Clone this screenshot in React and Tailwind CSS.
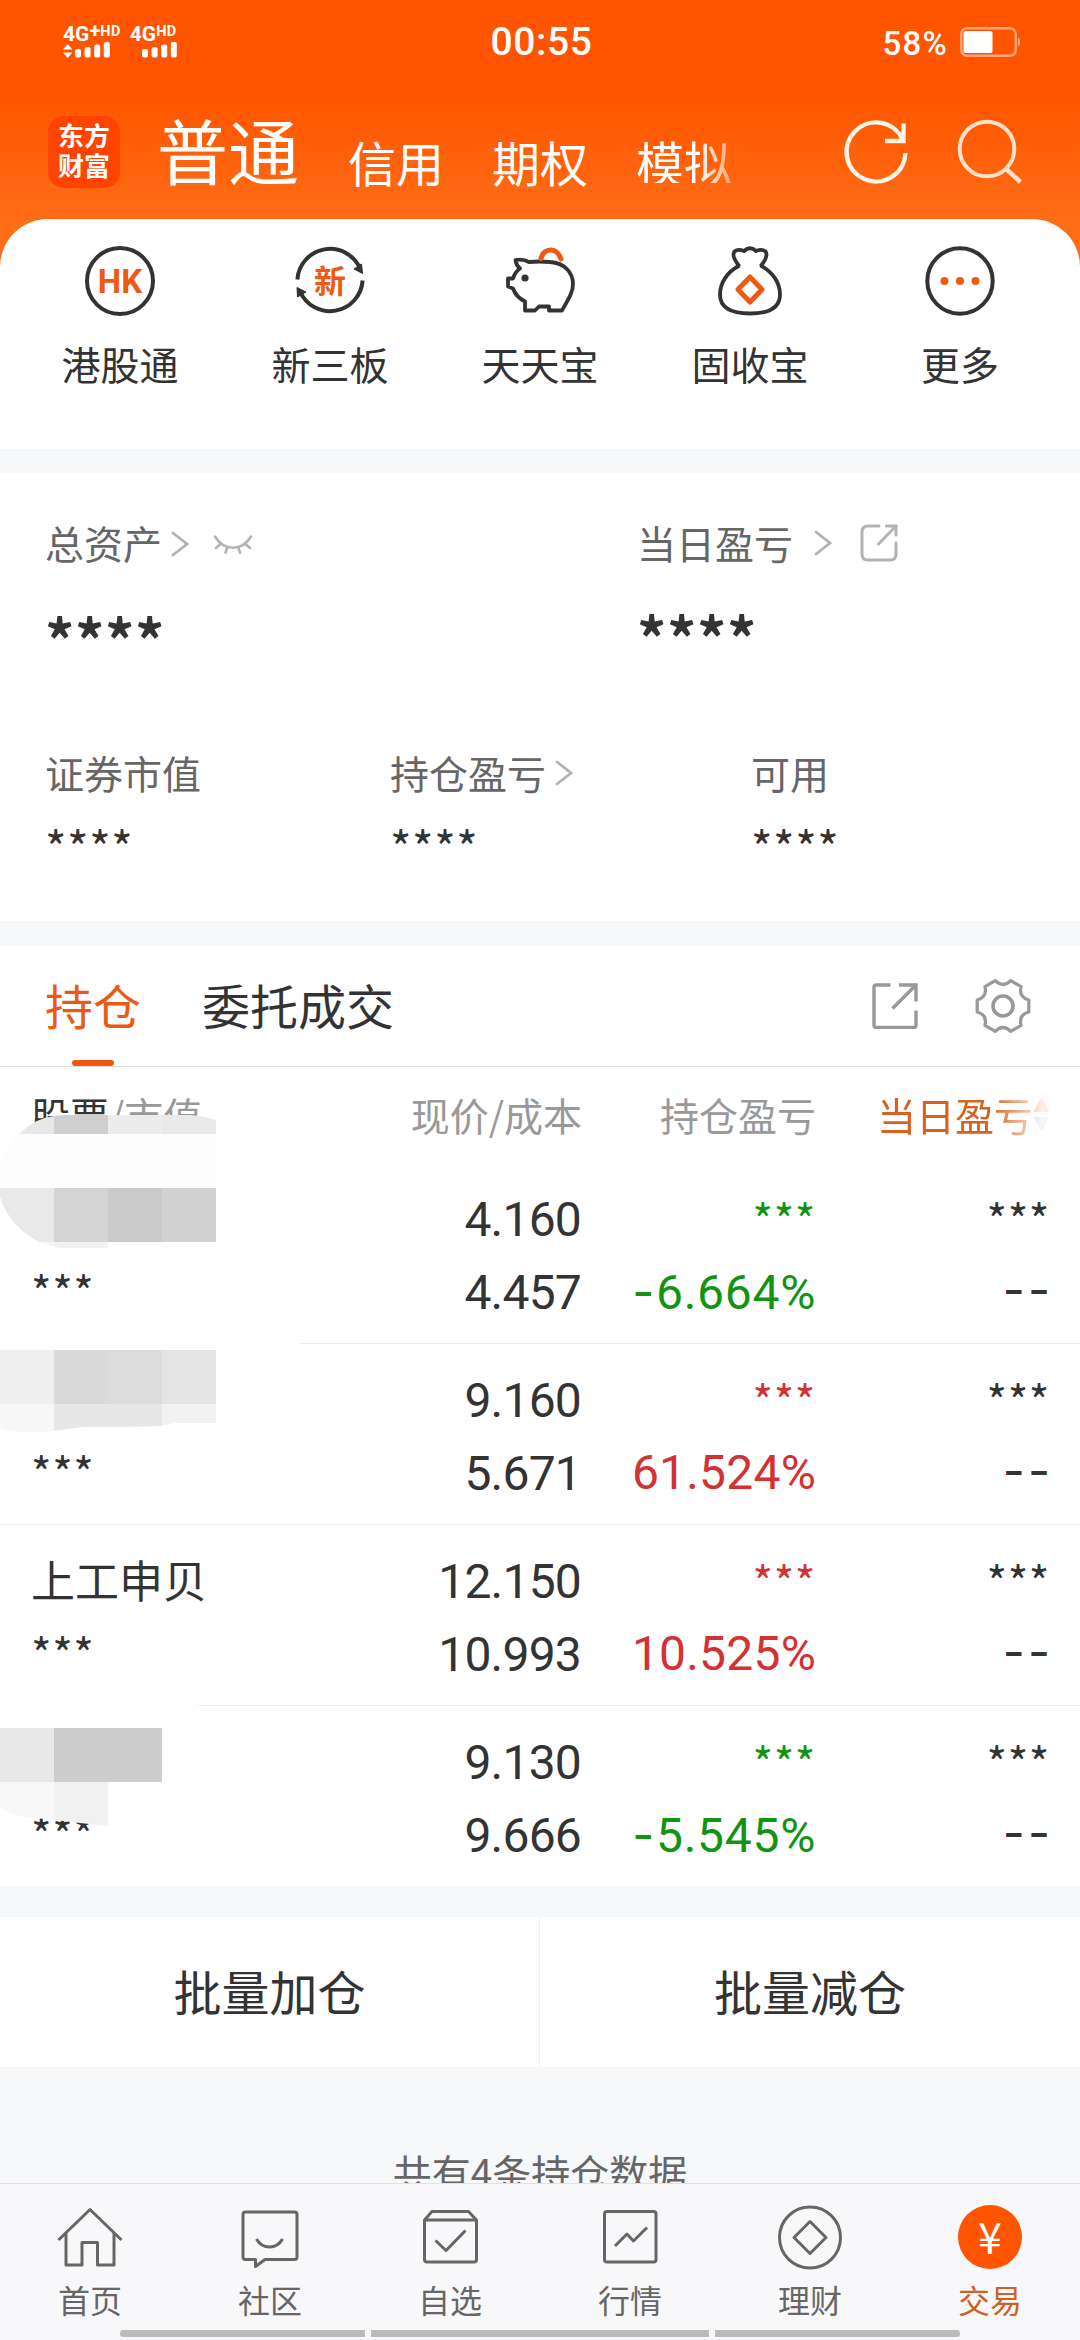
const CJK = "font-['Noto_Sans_CJK_SC',sans-serif]";
const NUM = "font-['Roboto','Noto_Sans_CJK_SC',sans-serif]";

const Stars = ({ children, className = '' }) => (
  <span className={`block tracking-[0.6px] ${className}`}>{children}</span>
);

const Chevron = ({ className = '' }) => (
  <svg viewBox="0 0 18 28" className={`h-7 w-[18px] shrink-0 ${className}`} fill="none" stroke="#b3b3b3" strokeWidth="2.8" strokeLinecap="round">
    <path d="M2 3L16 14L2 25" />
  </svg>
);

/* ---------- status bar ---------- */

const Signal = ({ plus }) => (
  <div className="flex flex-col">
    <div className="flex h-4 items-start font-bold leading-none">
      <span className="text-[21px] leading-[16px]">4G</span>
      {plus && <span className="text-[20px] leading-[10px]">+</span>}
      <span className="text-[14.5px] leading-[11px] tracking-[0.4px]">HD</span>
    </div>
    <svg viewBox="0 0 48 17" className="h-[17px] w-12" fill="#fff">
      {plus && <path d="M0 7.5L4.7 2L9.4 7.5ZM0 10.5H9.4L4.7 16Z" />}
      <g transform="translate(12 0)">
        <rect x="0" y="7" width="6" height="8.5" rx="2" />
        <rect x="9.6" y="5" width="6" height="10.5" rx="2" />
        <rect x="19.2" y="2.5" width="6" height="13" rx="2" />
        <rect x="28.8" y="0" width="6" height="15.5" rx="2" />
      </g>
    </svg>
  </div>
);

const StatusBar = () => (
  <div className={`grid h-[84px] grid-cols-3 items-center pl-[63px] pr-[60px] text-white ${NUM}`}>
    <div className="flex gap-[9px]">
      <Signal plus />
      <Signal />
    </div>
    <div className="text-center text-[39px] font-medium leading-none tracking-[0.6px]">00:55</div>
    <div className="flex items-center justify-end">
      <span className="mt-[2px] text-[33px] font-medium leading-none tracking-[1.2px]">58%</span>
      <svg viewBox="0 0 60 30" className="ml-[12px] h-[30px] w-[60px]" fill="none">
        <rect x="1.2" y="1.2" width="54.6" height="27.6" rx="6" stroke="#ffa679" strokeWidth="2.4" />
        <rect x="3.5" y="4" width="29" height="22" rx="2" fill="#fff" />
        <path d="M58 10.5Q60 11 60 15Q60 19 58 19.5Z" fill="#ffa679" />
      </svg>
    </div>
  </div>
);

/* ---------- title bar ---------- */

const TitleBar = () => (
  <div className="flex h-[135px] items-center pl-12 pr-[57px] text-white">
    <div className="flex h-[72px] w-[72px] flex-col items-center justify-center rounded-2xl bg-[#ff4300] text-[26px] font-bold leading-[30px]">
      <span className="-mt-[3px]">东方</span>
      <span>财富</span>
    </div>
    <div className="-mt-[7px] flex items-end text-[48px] leading-[44px]">
      <span className="ml-[37px] text-[71px] leading-[70px]">普通</span>
      <span className="ml-[49px]">信用</span>
      <span className="ml-12">期权</span>
      <span className="ml-12 [mask-image:linear-gradient(to_right,black_66%,rgba(0,0,0,0.4)_100%)]">模拟</span>
    </div>
    <svg viewBox="0 0 66 66" className="ml-auto h-[66px] w-[66px]" fill="none" stroke="#fff4e6" strokeWidth="4.4">
      <path d="M62.5 34A29.5 29.5 0 1 1 60 21" />
      <path d="M60.5 4.5V22H42" />
    </svg>
    <svg viewBox="0 0 66 66" className="ml-12 h-[66px] w-[66px]" fill="none" stroke="#ffe0c8" strokeWidth="4">
      <circle cx="30" cy="30" r="27.3" />
      <path d="M48.5 49.5L63.5 63" strokeWidth="4.6" />
    </svg>
  </div>
);

/* ---------- shortcuts ---------- */

const HkIcon = () => (
  <div className={`flex h-[70px] w-[70px] items-center justify-center rounded-full border-[4px] border-[#333] text-[33px] font-bold leading-none text-[#ee5a14] ${NUM}`}>
    HK
  </div>
);

const NewBoardIcon = () => (
  <div className="relative flex h-[70px] w-[70px] items-center justify-center">
    <span className="-mt-[4px] text-[32px] font-bold leading-none text-[#ee5a14]">新</span>
    <svg viewBox="0 0 70 70" className="absolute inset-0" fill="none" stroke="#333" strokeWidth="4">
      <path d="M2.4 33.5A32.7 32.7 0 0 1 65 22.5" />
      <path d="M67.6 34.5A32.7 32.7 0 0 1 5 45.5" />
      <path d="M59 23L66.5 18L67.5 27.5ZM11 46L2.5 51L2 41.5Z" fill="#333" strokeWidth="1" />
    </svg>
  </div>
);

const PigIcon = () => (
  <svg viewBox="0 0 70 70" className="h-[70px] w-[70px]" fill="none" stroke="#333" strokeWidth="3.8" strokeLinejoin="round">
    <path d="M10.5 14Q18 12.5 24 16Q34 15 45 16C60 17 68 27 68 38C68 46 64 52 57 64.5H44V60.5H34L30 64.5H20V55.5Q11 51 8 42.5L3 40.5V32.5H8Q10 26 15 22.5Q11 19 10.5 14Z" />
    <circle cx="20" cy="32" r="3.6" fill="#333" stroke="none" />
    <path d="M36 12.5C39 1 52 1 56 13" stroke="#ee5a14" strokeWidth="5" strokeLinecap="round" />
  </svg>
);

const BagIcon = () => (
  <svg viewBox="0 0 70 70" className="h-[70px] w-[70px]" fill="none" stroke="#333" strokeWidth="3.8" strokeLinejoin="round">
    <path d="M24.5 20.5Q16 10 19.5 5.5Q23 2.5 29 5Q35 -0.5 41 5Q47 2.5 50.5 5.5Q54 10 45.5 20.5" />
    <path d="M24.5 19.5C12 26 5 37 5 48.5C5 60 13 67.5 35 67.5S65 60 65 48.5C65 37 58 26 45.5 19.5" />
    <path d="M35 31L47 43.5L35 56L23 43.5Z" stroke="#ee5a14" strokeWidth="5" />
  </svg>
);

const MoreIcon = () => (
  <svg viewBox="0 0 70 70" className="h-[70px] w-[70px]" fill="#ee5a14">
    <circle cx="35" cy="35" r="32.7" fill="none" stroke="#333" strokeWidth="4" />
    <circle cx="19.5" cy="35" r="4" />
    <circle cx="35" cy="35" r="4" />
    <circle cx="50.5" cy="35" r="4" />
  </svg>
);

const shortcuts = [
  { label: '港股通', Icon: HkIcon },
  { label: '新三板', Icon: NewBoardIcon },
  { label: '天天宝', Icon: PigIcon },
  { label: '固收宝', Icon: BagIcon },
  { label: '更多', Icon: MoreIcon },
];

const Shortcuts = () => (
  <div className="grid h-[230px] grid-cols-5 rounded-t-[48px] bg-white px-[15px] pt-[27px]">
    {shortcuts.map(({ label, Icon }) => (
      <div key={label} className="flex flex-col items-center">
        <Icon />
        <span className="mt-[27px] text-[39px] leading-[40px] text-[#333]">{label}</span>
      </div>
    ))}
  </div>
);

/* ---------- assets ---------- */

const Assets = () => (
  <section className="mt-6 h-[448px] bg-white text-[39px] leading-[40px] text-[#666]">
    <div className="flex pl-[45px] pt-[49px]">
      <div className="w-[592px]">
        <div className="flex items-center">
          总资产
          <Chevron className="ml-[9px] mt-[3px]" />
          <svg viewBox="0 0 40 20" className="ml-6 mt-[3px] h-5 w-10" fill="none" stroke="#b3b3b3" strokeWidth="2.6" strokeLinecap="round">
            <path d="M2 2.5C11 17.5 29 17.5 38 2.5M7 10.5L3 14M14 14.5L12.5 18.5M25.5 14.5L27 18.5M33 10.5L37 14" />
          </svg>
        </div>
        <Stars className="mt-[46px] text-[58px] font-bold leading-[60px] text-[#333]">****</Stars>
      </div>
      <div>
        <div className="flex items-center">
          当日盈亏
          <Chevron className="ml-[21px] mt-[2px]" />
          <svg viewBox="0 0 38 38" className="ml-[28px] mt-[2px] h-[38px] w-[38px]" fill="none" stroke="#b3b3b3" strokeWidth="3" strokeLinecap="round">
            <path d="M19 2H8Q2 2 2 8V30Q2 36 8 36H30Q36 36 36 30V19" />
            <path d="M26.5 2H36V11M36 2L18.5 20" />
          </svg>
        </div>
        <Stars className="mt-[44px] text-[58px] font-bold leading-[60px] text-[#333]">****</Stars>
      </div>
    </div>
    <div className="mt-[84px] flex pl-[45px]">
      <div className="w-[345px]">
        证券市值
        <Stars className="mt-[32px] text-[46px] leading-[44px] text-[#333]">****</Stars>
      </div>
      <div className="w-[361px]">
        <div className="flex items-center">
          持仓盈亏
          <Chevron className="ml-[9px] mt-[2px]" />
        </div>
        <Stars className="mt-[32px] text-[46px] leading-[44px] text-[#333]">****</Stars>
      </div>
      <div>
        可用
        <Stars className="mt-[32px] text-[46px] leading-[44px] text-[#333]">****</Stars>
      </div>
    </div>
  </section>
);

/* ---------- positions ---------- */

const Tabs = () => (
  <div className="flex h-[121px] items-center border-b border-[#ddd] pl-[45px] pr-[49px] text-[48px] leading-[117px]">
    <div className="relative h-[120px] text-[#ea5a14]">
      持仓
      <span className="absolute bottom-0 left-[27px] h-[6px] w-[42px] rounded-full bg-[#f5560f]" />
    </div>
    <span className="-mt-[3px] ml-[61px] text-[#333]">委托成交</span>
    <svg viewBox="0 0 46 46" className="ml-auto h-[46px] w-[46px]" fill="none" stroke="#999" strokeWidth="3.4">
      <path d="M18.5 2H4Q2 2 2 4V42.5Q2 44.5 4 44.5H42Q44 44.5 44 42.5V27.5" />
      <path d="M27 2H44V18.5M44 2L20.5 25.5" />
    </svg>
    <svg viewBox="-28 -28 56 56" className="ml-[57px] h-14 w-14" fill="none" stroke="#999" strokeWidth="3.2" strokeLinejoin="round">
      <path d="M25.8 -6V6Q15.3 8.9 18.1 19.4L7.7 25.3Q0 17.7 -7.7 25.3L-18.1 19.4Q-15.3 8.9 -25.8 6V-6Q-15.3 -8.9 -18.1 -19.4L-7.7 -25.3Q0 -17.7 7.7 -25.3L18.1 -19.4Q15.3 -8.9 25.8 -6Z" />
      <circle r="10" strokeWidth="3.6" />
    </svg>
  </div>
);

const TableHead = () => (
  <div className="flex h-24 items-center pb-[2px] pl-[31px] pr-[30px] text-[39px] leading-[94px] text-[#999]">
    <div className="w-[250px]">
      <span className="text-[#333]">股票</span>/市值
    </div>
    <div className="w-[301px] text-right">现价/成本</div>
    <div className="w-[234px] text-right">持仓盈亏</div>
    <div className="ml-auto flex items-center text-[#d9601f] [mask-image:linear-gradient(to_right,black_66%,rgba(0,0,0,0.12)_95%)]">
      当日盈亏
      <svg viewBox="0 0 17 36" className="h-9 w-[17px]">
        <path d="M8.5 1L16.5 16H0.5Z" fill="#ff5a10" />
        <path d="M8.5 35L16.5 21H0.5Z" fill="#aaa" />
      </svg>
    </div>
  </div>
);

const positions = [
  { name: '', price: '4.160', cost: '4.457', sign: '-', rate: '6.664%', color: 'text-[#129412]' },
  { name: '', price: '9.160', cost: '5.671', sign: '', rate: '61.524%', color: 'text-[#d23232]' },
  { name: '上工申贝', price: '12.150', cost: '10.993', sign: '', rate: '10.525%', color: 'text-[#d23232]' },
  { name: '', price: '9.130', cost: '9.666', sign: '-', rate: '5.545%', color: 'text-[#129412]' },
];

const PositionRow = ({ row, last }) => (
  <div className={`flex pl-[31px] pr-[30px] pt-[26px] text-[#333] ${last ? 'h-[180px]' : 'h-[181px] border-b border-[#ebebeb]'}`}>
    <div className="w-[250px]">
      <div className="h-[60px] text-[44px] leading-[56px]">{row.name}</div>
      <Stars className="mt-[21px] text-[44px] leading-[40px]">***</Stars>
    </div>
    <div className={`w-[300px] pt-px text-right text-[48px] leading-[60px] tracking-[-0.8px] ${NUM}`}>
      <div>{row.price}</div>
      <div className="mt-[13px]">{row.cost}</div>
    </div>
    <div className={`w-[235px] text-right ${row.color}`}>
      <Stars className="mt-[9px] h-[51px] text-[44px] leading-[40px]">***</Stars>
      <div className={`mt-[13px] whitespace-nowrap text-[48px] leading-[60px] ${NUM} ${row.sign ? 'tracking-[0.7px]' : 'tracking-[0.2px]'}`}>
        {row.sign && <span className="mr-px font-['Inter']">{row.sign}</span>}
        {row.rate}
      </div>
    </div>
    <div className="ml-auto text-right">
      <Stars className="mt-[9px] h-[51px] text-[44px] leading-[40px]">***</Stars>
      <div className="-mr-[3px] mt-[11px] text-[48px] leading-[60px] tracking-[3px] font-['Inter']">--</div>
    </div>
  </div>
);

// Pixelated smears that hide the stock names
const mosaics = [
  {
    id: 'm1',
    clip: 'M0 98Q8 73 30 58Q45 48 65 48H190Q205 49 216 53V175H108V181H60Q30 176 12 153Q3 141 0 130Z',
    cells: [
      [0, 45, 54, 22, '#e8e8e8'], [54, 45, 54, 22, '#cfcfcf'], [108, 45, 54, 22, '#ececec'], [162, 45, 54, 22, '#e9e9e9'],
      [0, 67, 216, 54, '#fdfdfd'],
      [0, 121, 54, 54, '#e9e9e9'], [54, 121, 54, 54, '#d4d4d4'], [108, 121, 54, 54, '#cacaca'], [162, 121, 54, 54, '#d2d2d2'],
      [0, 175, 54, 8, '#f6f6f6'], [54, 175, 54, 8, '#f1f1f1'],
    ],
  },
  {
    id: 'm2',
    clip: 'M0 262L30 247H285L300 270V283H216V356H175L160 359L124 360H83L54 364Q20 368 0 361Z',
    cells: [
      [0, 240, 300, 43, '#fefefe'],
      [0, 283, 54, 54, '#efefef'], [54, 283, 54, 54, '#dadada'], [108, 283, 54, 54, '#dcdcdc'], [162, 283, 54, 54, '#e4e4e4'],
      [0, 337, 54, 32, '#f7f7f7'], [54, 337, 108, 32, '#e7e7e7'], [162, 337, 54, 32, '#f2f2f2'],
    ],
  },
  {
    id: 'm3',
    clip: 'M0 632H198L216 661V760L150 762L108 759L80 756L54 753L25 750Q10 747 0 740Z',
    cells: [
      [0, 630, 198, 31, '#fefefe'],
      [0, 661, 54, 54, '#e8e8e8'], [54, 661, 108, 54, '#cdcdcd'], [162, 661, 54, 54, '#fefefe'],
      [0, 715, 54, 50, '#f8f8f8'], [54, 715, 54, 50, '#f1f1f1'], [108, 715, 108, 50, '#fefefe'],
    ],
  },
];

const MosaicLayer = () => (
  <svg viewBox="0 0 320 818" className="absolute left-0 top-0 h-[818px] w-80">
    {mosaics.map((m) => (
      <g key={m.id} clipPath={`url(#${m.id})`}>
        <clipPath id={m.id}>
          <path d={m.clip} />
        </clipPath>
        {m.cells.map(([x, y, w, h, fill]) => (
          <rect key={`${x}-${y}`} x={x} y={y} width={w} height={h} fill={fill} />
        ))}
      </g>
    ))}
  </svg>
);

const Positions = () => (
  <section className="mt-[25px] bg-white">
    <Tabs />
    <div className="relative">
      <TableHead />
      {positions.map((row, i) => (
        <PositionRow key={row.price} row={row} last={i === positions.length - 1} />
      ))}
      <MosaicLayer />
    </div>
  </section>
);

const BatchActions = () => (
  <div className="mt-[31px] grid h-[150px] grid-cols-2 bg-white text-center text-[48px] leading-[147px] text-[#333]">
    <div className="border-r border-[#eee]">批量加仓</div>
    <div>批量减仓</div>
  </div>
);

/* ---------- bottom navigation ---------- */

const navIcons = {
  home: <path d="M1.5 35L33 4.5L64.5 35M9 28V60H25V37.5H40.5V60H57V28" />,
  community: (
    <>
      <path d="M8.5 7H57.5Q60 7 60 9.5V52Q60 54.5 57.5 54.5H28L18.5 61.5V54.5H8.5Q6 54.5 6 52V9.5Q6 7 8.5 7Z" />
      <path d="M19.5 34Q24 42 32.5 42T45.5 34" />
    </>
  ),
  picks: (
    <>
      <path d="M7.5 15L15 6.5H51.5L59.5 15V54.5Q59.5 57 57 57H10Q7.5 57 7.5 54.5ZM7.5 15H59.5" />
      <path d="M18.5 35.5L29 45.5L48.5 25.5" />
    </>
  ),
  market: (
    <>
      <rect x="7.5" y="6.5" width="51.5" height="50.5" rx="2.5" />
      <path d="M18 41L30 29L36.5 36L50 22.5" />
    </>
  ),
  wealth: (
    <>
      <circle cx="33" cy="32.5" r="30.5" />
      <path d="M33 16.5L49 32.5L33 48.5L17 32.5Z" />
    </>
  ),
};

const navItems = [
  { key: 'home', label: '首页' },
  { key: 'community', label: '社区' },
  { key: 'picks', label: '自选' },
  { key: 'market', label: '行情' },
  { key: 'wealth', label: '理财' },
  { key: 'trade', label: '交易', active: true },
];

const BottomNav = () => (
  <nav className="relative grid h-[157px] shrink-0 grid-cols-6 border-t border-[#e2e2e4] bg-[#f8f8fa] pt-[21px]">
    {navItems.map(({ key, label, active }) => (
      <div key={key} className="flex flex-col items-center">
        {active ? (
          <div className="flex h-16 w-16 items-center justify-center rounded-full bg-[#ff5500] pb-[4px] text-[43px] leading-none text-white">¥</div>
        ) : (
          <svg viewBox="0 0 66 66" className="h-[66px] w-[66px]" fill="none" stroke="#666" strokeWidth="3" strokeLinejoin="round">
            {navIcons[key]}
          </svg>
        )}
        <span className={`text-[32px] leading-[34px] ${active ? 'mt-[13px] text-[#cf5f22]' : 'mt-[11px] text-[#666]'}`}>{label}</span>
      </div>
    ))}
    <div className="absolute bottom-[3px] left-[120px] flex h-[7px] w-[840px] gap-[6px]">
      <span className="w-[245px] rounded-l-full bg-[#bbb]" />
      <span className="flex-1 bg-[#bbb]" />
      <span className="w-[245px] rounded-r-full bg-[#bbb]" />
    </div>
  </nav>
);

export default function App() {
  return (
    <div className={`flex h-[2340px] w-[1080px] flex-col overflow-hidden bg-[#f7f8fa] ${CJK}`}>
      <header className="bg-[linear-gradient(180deg,#ff5500_95px,#ff6e17_225px)]">
        <StatusBar />
        <TitleBar />
        <Shortcuts />
      </header>
      <Assets />
      <Positions />
      <BatchActions />
      <div className="h-[116px] overflow-hidden pt-[84px] text-center text-[39px] leading-[40px] text-[#666]">共有4条持仓数据</div>
      <BottomNav />
    </div>
  );
}
